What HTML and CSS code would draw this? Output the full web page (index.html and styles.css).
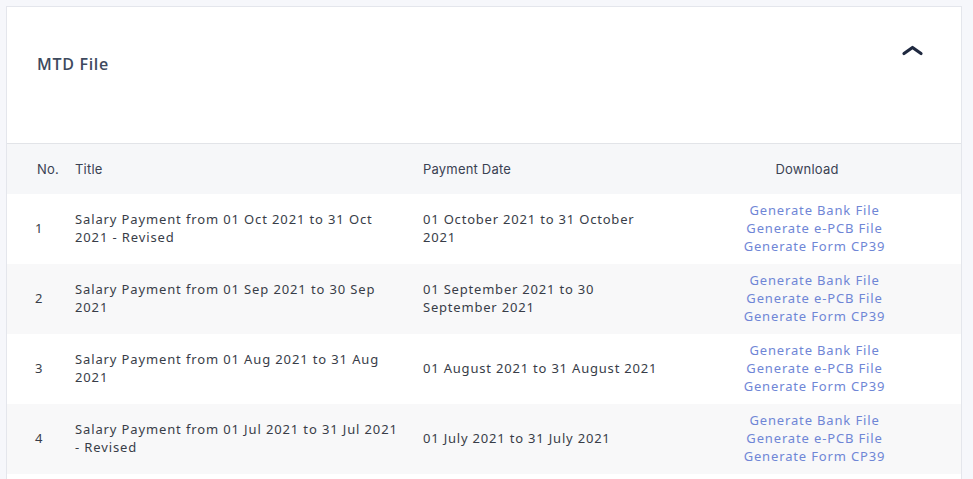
FILE: index.html
```html
<!DOCTYPE html>
<html>
<head>
<meta charset="utf-8">
<link rel="stylesheet" href="styles.css">
</head>
<body>
<div class="card">
  <div class="card-head">
    <h2 class="title">MTD File</h2>
    <svg class="chev" width="24" height="14" viewBox="0 0 24 14"><path d="M4 10.5 L12.5 4.5 L21 10.5" fill="none" stroke="#1f2940" stroke-width="3.2" stroke-linecap="round" stroke-linejoin="round"/></svg>
  </div>
  <table class="tbl">
    <colgroup><col class="c-no"><col class="c-title"><col class="c-date"><col class="c-dl"></colgroup>
    <thead>
      <tr><th>No.</th><th>Title</th><th>Payment Date</th><th class="center dl-head">Download</th></tr>
    </thead>
    <tbody>
      <tr>
        <td class="num">1</td>
        <td>Salary Payment from 01 Oct 2021 to 31 Oct 2021 - Revised</td>
        <td class="date">01 October 2021 to 31 October 2021</td>
        <td class="center links"><a>Generate Bank File</a><a>Generate e-PCB File</a><a>Generate Form CP39</a></td>
      </tr>
      <tr>
        <td class="num">2</td>
        <td>Salary Payment from 01 Sep 2021 to 30 Sep 2021</td>
        <td class="date">01 September 2021 to 30 September 2021</td>
        <td class="center links"><a>Generate Bank File</a><a>Generate e-PCB File</a><a>Generate Form CP39</a></td>
      </tr>
      <tr>
        <td class="num">3</td>
        <td>Salary Payment from 01 Aug 2021 to 31 Aug 2021</td>
        <td class="date">01 August 2021 to 31 August 2021</td>
        <td class="center links"><a>Generate Bank File</a><a>Generate e-PCB File</a><a>Generate Form CP39</a></td>
      </tr>
      <tr>
        <td class="num">4</td>
        <td>Salary Payment from 01 Jul 2021 to 31 Jul 2021 - Revised</td>
        <td class="date">01 July 2021 to 31 July 2021</td>
        <td class="center links"><a>Generate Bank File</a><a>Generate e-PCB File</a><a>Generate Form CP39</a></td>
      </tr>
    </tbody>
  </table>
</div>
</body>
</html>
```
FILE: styles.css
```css
html, body { margin: 0; padding: 0; }
body {
  background: #f6f7fb;
  font-family: "Noto Sans", "Liberation Sans", sans-serif;
  color: #383d48;
}
.card {
  margin: 6px 0 0 6px;
  width: 954px;
  background: #fff;
  border: 1px solid #e4e6ec;
  border-bottom: none;
  height: 480px;
}
.card-head {
  height: 137px;
  border-bottom: 1px solid #e2e4e8;
  display: flex;
  align-items: flex-start;
  justify-content: space-between;
  padding: 0 37px 0 30px;
  box-sizing: border-box;
}
.title {
  margin: 46px 0 0 0;
  font-size: 16px;
  font-weight: 600;
  color: #3e4a5e;
  letter-spacing: 0.7px;
  font-family: "Open Sans", "Noto Sans", sans-serif;
}
.chev { margin-top: 36px; }
.tbl {
  width: 954px;
  border-collapse: collapse;
  table-layout: fixed;
}
.c-no { width: 68px; }
.c-title { width: 348px; }
.c-date { width: 245px; }
.c-dl { width: 293px; }
.tbl th {
  height: 50px;
  background: #f6f7f9;
  text-align: left;
  font-weight: 400;
  font-size: 13px;
  letter-spacing: 0.2px;
  color: #3a4253;
  font-family: "Inter", "Liberation Sans", sans-serif;
  padding: 0;
  vertical-align: middle;
}
.tbl th.dl-head { padding-right: 15px; }
.tbl th:first-child { padding-left: 30px; }
.tbl td {
  height: 70px;
  padding: 0 18px 2px 0;
  font-size: 13px;
  line-height: 18px;
  letter-spacing: 0.87px;
  vertical-align: middle;
  box-sizing: border-box;
}
.tbl td.num { padding-left: 28px; padding-right: 0; }
.tbl td.date { padding-right: 6px; letter-spacing: 0.8px; }
.tbl tbody tr:nth-child(even) td { background: #f8f8f9; }
.tbl .center { text-align: center; }
.tbl td.center { padding: 0 0 2px 0; }
.links a {
  display: block;
  color: #6f86d6;
  text-decoration: none;
  letter-spacing: 0.85px;
}
```
